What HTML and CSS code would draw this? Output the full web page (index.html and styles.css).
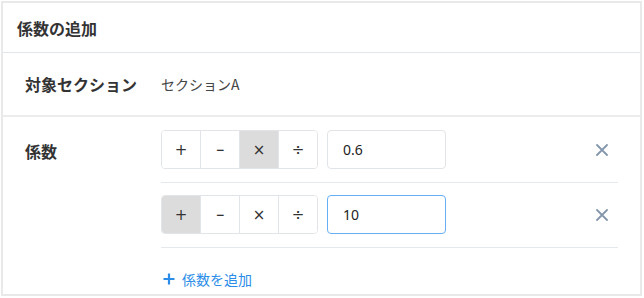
FILE: index.html
```html
<!DOCTYPE html>
<html lang="ja">
<head>
<meta charset="utf-8">
<link rel="stylesheet" href="styles.css">
</head>
<body>
<div class="card">
  <div class="card-header">係数の追加</div>
  <div class="row row-section">
    <div class="label">対象セクション</div>
    <div class="value">セクションA</div>
  </div>
  <div class="row row-coef">
    <div class="label label-top">係数</div>
    <div class="coef-list">
      <div class="coef-item">
        <div class="ops">
          <button class="op">+</button>
          <button class="op"><span class="minus">−</span></button>
          <button class="op active">×</button>
          <button class="op">÷</button>
        </div>
        <div class="input">0.6</div>
        <button class="remove" aria-label="削除">
          <svg width="12" height="12" viewBox="0 0 12 12"><path d="M1 1L11 11M11 1L1 11" stroke="#8496ab" stroke-width="1.8" stroke-linecap="round"/></svg>
        </button>
      </div>
      <div class="coef-item">
        <div class="ops">
          <button class="op active">+</button>
          <button class="op"><span class="minus">−</span></button>
          <button class="op">×</button>
          <button class="op">÷</button>
        </div>
        <div class="input focused">10</div>
        <button class="remove" aria-label="削除">
          <svg width="12" height="12" viewBox="0 0 12 12"><path d="M1 1L11 11M11 1L1 11" stroke="#8496ab" stroke-width="1.8" stroke-linecap="round"/></svg>
        </button>
      </div>
      <a class="add-link">
        <svg width="12" height="12" viewBox="0 0 12 12"><path d="M6 0.5V11.5M0.5 6H11.5" stroke="#2b8de8" stroke-width="2.2"/></svg>
        <span>係数を追加</span>
      </a>
    </div>
  </div>
</div>
</body>
</html>
```
FILE: styles.css
```css
* { box-sizing: border-box; }
html, body { margin: 0; padding: 0; background: #fff; }
body {
  font-family: "Noto Sans CJK JP", "Noto Sans", sans-serif;
  color: #333;
  padding: 1px 2px 2px 1px;
}
.card {
  border: 2px solid #e9e9e9;
  height: 295px;
  overflow: hidden;
  background: #fff;
}
.card-header {
  height: 50px;
  padding: 0 14px;
  display: flex;
  align-items: center;
  font-size: 16px;
  font-weight: bold;
  color: #333;
  border-bottom: 1px solid #e2e7eb;
}
.row {
  display: grid;
  grid-template-columns: 136px 1fr;
  padding: 0 22px 0 22px;
}
.row-section {
  height: 64px;
  align-items: center;
  border-bottom: 2px solid #ececec;
}
.label {
  font-size: 16px;
  font-weight: bold;
  color: #333;
}
.label-top { padding-top: 13px; line-height: 1; }
.value { font-size: 14px; color: #444; }
.row-coef { padding-top: 13px; }
.coef-item {
  display: flex;
  align-items: center;
  padding-bottom: 13px;
  margin-bottom: 12px;
  border-bottom: 1px solid #e6e9ec;
}
.ops {
  display: flex;
  border: 1px solid #e1e5e9;
  border-radius: 4px;
  overflow: hidden;
  height: 39px;
}
.op {
  width: 39px;
  height: 100%;
  border: 0;
  border-left: 1px solid #e1e5e9;
  background: #fff;
  font-family: "DejaVu Sans", sans-serif;
  font-size: 15px;
  color: #333;
  padding: 0;
}
.op:first-child { border-left: 0; width: 38px; }
.op.active { background: #dcdcdc; }
.minus { display: inline-block; transform: scaleX(0.72); }
.input {
  margin-left: 9px;
  width: 119px;
  height: 39px;
  border: 1px solid #e1e5e9;
  border-radius: 4px;
  padding-left: 15px;
  display: flex;
  align-items: center;
  font-family: "Noto Sans", sans-serif;
  font-size: 14px;
  color: #222;
}
.input.focused { border-color: #66aef5; }
.remove {
  margin-left: auto;
  width: 32px;
  height: 32px;
  border: 0;
  background: none;
  display: flex;
  align-items: center;
  justify-content: center;
  padding: 0;
}
.add-link {
  display: flex;
  align-items: center;
  gap: 7px;
  margin-top: 21px;
  padding-left: 2px;
  color: #2b8de8;
  font-size: 14px;
}
```
